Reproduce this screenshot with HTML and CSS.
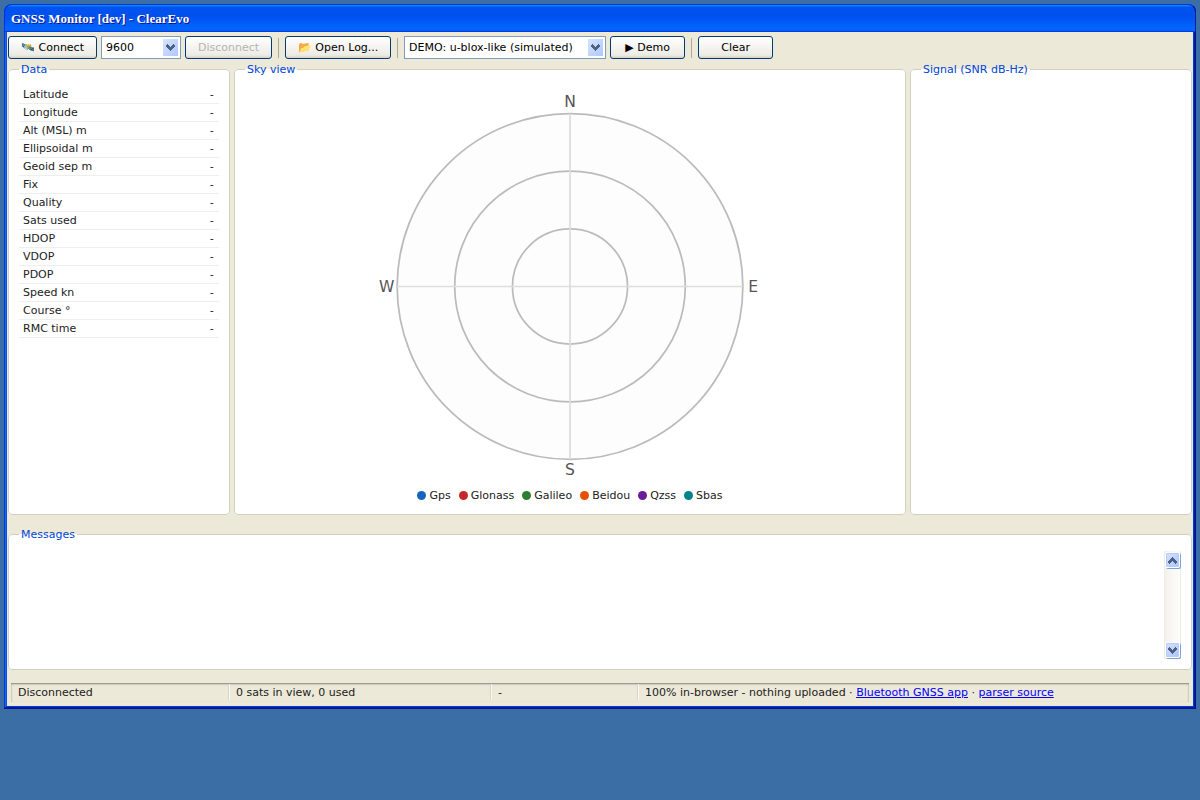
FILE: index.html
```html
<!DOCTYPE html>
<html lang="en">
<head>
<meta charset="utf-8">
<meta name="viewport" content="width=device-width, initial-scale=1">
<title>GNSS Monitor [dev] - ClearEvo</title>
<link rel="stylesheet" href="styles.css">
</head>
<body>
<main class="window">
  <header class="title-bar"><h1 class="title">GNSS Monitor [dev] - ClearEvo</h1></header>
  <div class="window-body">
    <div class="toolbar">
      <button type="button" class="btn">🛰️ Connect</button>
      <select class="select baud" aria-label="Baud rate"><option>9600</option></select>
      <button type="button" class="btn" disabled>Disconnect</button>
      <span class="sep"></span>
      <button type="button" class="btn open">📂 Open Log...</button>
      <span class="sep"></span>
      <select class="select source" aria-label="Demo source"><option>DEMO: u-blox-like (simulated)</option></select>
      <button type="button" class="btn">▶ Demo</button>
      <span class="sep"></span>
      <button type="button" class="btn">Clear</button>
    </div>
    <div class="panels">
      <fieldset class="group">
        <legend>Data</legend>
        <table class="data">
          <tbody>
            <tr><th scope="row">Latitude</th><td>-</td></tr>
            <tr><th scope="row">Longitude</th><td>-</td></tr>
            <tr><th scope="row">Alt (MSL) m</th><td>-</td></tr>
            <tr><th scope="row">Ellipsoidal m</th><td>-</td></tr>
            <tr><th scope="row">Geoid sep m</th><td>-</td></tr>
            <tr><th scope="row">Fix</th><td>-</td></tr>
            <tr><th scope="row">Quality</th><td>-</td></tr>
            <tr><th scope="row">Sats used</th><td>-</td></tr>
            <tr><th scope="row">HDOP</th><td>-</td></tr>
            <tr><th scope="row">VDOP</th><td>-</td></tr>
            <tr><th scope="row">PDOP</th><td>-</td></tr>
            <tr><th scope="row">Speed kn</th><td>-</td></tr>
            <tr><th scope="row">Course °</th><td>-</td></tr>
            <tr><th scope="row">RMC time</th><td>-</td></tr>
          </tbody>
        </table>
      </fieldset>
      <fieldset class="group">
        <legend>Sky view</legend>
        <svg class="sky" viewBox="-116 -116 232 232" role="img" aria-label="Sky plot">
          <circle class="ring disc" r="100"/>
          <circle class="ring" r="66.7"/>
          <circle class="ring" r="33.3"/>
          <path class="axis" d="M-100 0H100M0-100V100"/>
          <text x="0" y="-104">N</text>
          <text x="106" y="3">E</text>
          <text x="0" y="109">S</text>
          <text x="-106" y="3">W</text>
        </svg>
        <ul class="key">
          <li><i class="dot gps"></i>Gps</li>
          <li><i class="dot glonass"></i>Glonass</li>
          <li><i class="dot galileo"></i>Galileo</li>
          <li><i class="dot beidou"></i>Beidou</li>
          <li><i class="dot qzss"></i>Qzss</li>
          <li><i class="dot sbas"></i>Sbas</li>
        </ul>
      </fieldset>
      <fieldset class="group">
        <legend>Signal (SNR dB-Hz)</legend>
      </fieldset>
    </div>
    <fieldset class="group messages">
      <legend>Messages</legend>
      <div class="log-frame">
        <div class="log" tabindex="0"></div>
        <div class="scrollbar">
          <button type="button" class="scroll-btn" aria-label="Scroll up">
            <svg width="9" height="7" viewBox="0 0 9 7"><path d="M0 4h1v-1h1v-1h1v-1h1v-1h1v1h1v1h1v1h1v1h1v2h-1v1h-1v-1h-1v-1h-1v-1h-1v1h-1v1h-1v1h-1v-1h-1z"/></svg>
          </button>
          <button type="button" class="scroll-btn" aria-label="Scroll down">
            <svg width="9" height="7" viewBox="0 0 9 7"><path d="M0 1h1v-1h1v1h1v1h1v1h1v-1h1v-1h1v-1h1v1h1v2h-1v1h-1v1h-1v1h-1v1h-1v-1h-1v-1h-1v-1h-1v-1h-1z"/></svg>
          </button>
        </div>
      </div>
    </fieldset>
    <footer class="status-bar">
      <p class="field">Disconnected</p>
      <p class="field">0 sats in view, 0 used</p>
      <p class="field">-</p>
      <p class="field">100% in-browser - nothing uploaded · <a href="#app">Bluetooth GNSS app</a> · <a href="#source">parser source</a></p>
    </footer>
  </div>
</main>
</body>
</html>
```
FILE: styles.css
```css
* { box-sizing: border-box; }

body {
  margin: 0;
  padding: 4px;
  background: #3b6ea5;
  color: #222;
  font: 11px/13px "DejaVu Sans", sans-serif;
}

.window {
  padding-bottom: 3px;
  background: #ece9d8;
  border-radius: 8px 8px 0 0;
  box-shadow: inset -1px -1px #00138c, inset 1px 1px #0831d9,
    inset -2px -2px #001ea0, inset 2px 2px #166aee,
    inset -3px -3px #003bda, inset 3px 3px #0855dd;
}

.title-bar {
  display: flex;
  align-items: center;
  height: 28px;
  padding: 0 6px;
  border: 1px solid #0831d9;
  border-right-color: #001ea0;
  border-bottom: 0;
  border-radius: 8px 8px 0 0;
  background: linear-gradient(180deg, #0997ff, #0053ee 8%, #0050ee 40%, #06f 88%, #06f 93%, #005bff 95%, #003dd7 96%, #003dd7);
}

.title {
  margin: 0;
  color: #fff;
  font: bold 13px/15px "Liberation Serif", serif;
  text-shadow: 1px 1px #0f1089;
}

.window-body { padding: 4px; }

.toolbar {
  display: flex;
  flex-wrap: wrap;
  align-items: center;
  gap: 4px;
  margin-bottom: 4px;
}

.btn {
  min-width: 75px;
  height: 23px;
  padding: 0 12px;
  border: 1px solid #003c74;
  border-radius: 3px;
  background: linear-gradient(180deg, #fff, #ecebe5 86%, #d8d0c4);
  color: #000;
  font: inherit;
}

.btn:disabled { color: #b4b4b0; }

.open {
  width: 106px;
  padding: 0;
}

.select {
  height: 23px;
  padding: 0 24px 0 4px;
  appearance: none;
  border: 1px solid #7f9db9;
  border-radius: 0;
  color: #000;
  font: inherit;
  background: #fff url("data:image/svg+xml,%3Csvg xmlns='http://www.w3.org/2000/svg' width='15' height='17' shape-rendering='crispEdges'%3E%3Cdefs%3E%3ClinearGradient id='g' x2='1' y2='1'%3E%3Cstop stop-color='%23d8e4ff'/%3E%3Cstop offset='1' stop-color='%23afc7fb'/%3E%3C/linearGradient%3E%3C/defs%3E%3Crect width='15' height='17' rx='1' fill='url(%23g)'/%3E%3Cpath d='M3 6h1v-1h1v1h1v1h1v1h1v-1h1v-1h1v-1h1v1h1v2h-1v1h-1v1h-1v1h-1v1h-1v-1h-1v-1h-1v-1h-1v-1h-1z' fill='%234d6185'/%3E%3C/svg%3E") no-repeat right 2px center;
}

.baud { width: 80px; }
.source { width: 202px; }

.sep {
  width: 1px;
  height: 20px;
  margin: 0 2px;
  background: #aca899;
}

.panels {
  display: grid;
  grid-template-columns: 222px minmax(0, 1fr) 282px;
  gap: 4px;
}

.group {
  min-width: 0;
  margin: 0;
  padding: 10px;
  border: 1px solid #d0d0bf;
  border-radius: 4px;
  background: #fff;
}

.group legend {
  padding: 0 2px;
  color: #0046d5;
}

.data {
  width: 100%;
  border-collapse: separate;
  border-spacing: 0;
}

.data th,
.data td {
  height: 18px;
  padding: 0 4px;
  border-bottom: 1px solid #eee;
  font-weight: normal;
  text-align: left;
}

.data td {
  font-family: "DejaVu Sans Mono", monospace;
  text-align: right;
}

.sky {
  display: block;
  width: 100%;
  height: 401px;
}

.ring { fill: none; stroke: #bbb; }
.disc { fill: #fdfdfd; }
.axis { fill: none; stroke: #ddd; }

.sky text {
  fill: #555;
  font-size: 9px;
  text-anchor: middle;
}

.key {
  display: flex;
  flex-wrap: wrap;
  justify-content: center;
  gap: 8px;
  margin: 0;
  padding: 2px 0;
  list-style: none;
}

.key li {
  display: flex;
  align-items: center;
  gap: 3px;
}

.dot {
  width: 9px;
  height: 9px;
  border-radius: 50%;
}

.gps { background: #1565c0; }
.glonass { background: #c62828; }
.galileo { background: #2e7d32; }
.beidou { background: #e65100; }
.qzss { background: #6a1b9a; }
.sbas { background: #00838f; }

.messages { margin: 13px 0; }

.log-frame {
  display: flex;
  height: 108px;
}

.log {
  flex: 1;
  overflow-y: auto;
}

.scrollbar {
  display: flex;
  flex-direction: column;
  justify-content: space-between;
  width: 17px;
  border: 1px solid #eeede5;
  border-width: 0 1px;
  background: linear-gradient(90deg, #f3f1ec, #fefefb);
}

.scroll-btn {
  display: flex;
  align-items: center;
  justify-content: center;
  width: 15px;
  height: 16px;
  margin: 1px 0 0;
  padding: 0;
  border: 1px solid #fff;
  border-radius: 2px;
  background: linear-gradient(135deg, #d8e4ff, #a9c3fa);
  box-shadow: inset 0 0 0 1px #b8cbf6, 1px 1px #7da2d8;
}

.scroll-btn:last-child { margin: 0 0 1px; }

.scroll-btn svg {
  fill: #4d6185;
  shape-rendering: crispEdges;
}

.status-bar {
  display: grid;
  grid-template-columns: 218fr 262fr 147fr 551fr;
  margin: 0 3px;
  padding: 1px 0 2px;
  box-shadow: inset 0 1px 2px #808080;
}

.field {
  margin: 0;
  padding: 2px 6px 1px;
  border-left: 1px solid rgba(255, 255, 255, .75);
  border-right: 1px solid rgba(208, 206, 191, .75);
}

.field:first-child { border-left-color: transparent; }
.field:last-child { border-right-color: transparent; }
.field a { color: #00f; }
```
